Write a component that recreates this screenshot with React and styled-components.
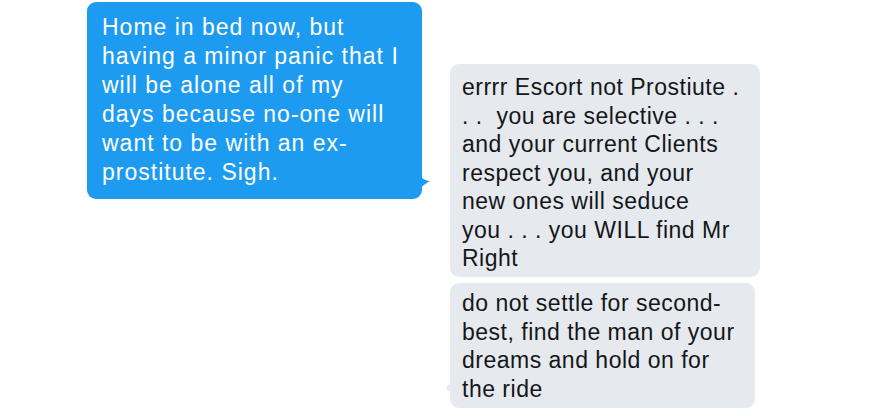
import styled, { createGlobalStyle } from 'styled-components';

const Global = createGlobalStyle`
  html, body {
    margin: 0;
    padding: 0;
    background: #ffffff;
  }
  body {
    font-family: 'Liberation Sans', Arial, sans-serif;
  }
`;

const Page = styled.div`
  width: 894px;
  height: 416px;
  display: flex;
  align-items: flex-start;
  overflow: hidden;
`;

const Column = styled.div`
  display: flex;
  flex-direction: column;
  gap: 6px;
  margin-left: ${(p) => p.left}px;
  margin-top: ${(p) => p.top}px;
`;

const Bubble = styled.div`
  position: relative;
  box-sizing: border-box;
  width: ${(p) => p.width}px;
  height: ${(p) => p.height}px;
  padding: ${(p) => p.padTop}px 0 0 ${(p) => p.padLeft}px;
  border-radius: 9px;
  background: ${(p) => (p.mine ? '#1d9bf0' : '#e6e9ed')};
  color: ${(p) => (p.mine ? '#ffffff' : '#14171a')};
  font-size: 23px;
  line-height: ${(p) => p.lh}px;
  letter-spacing: ${(p) => (p.mine ? 1 : 0.5)}px;
`;

const Line = styled.div`
  white-space: pre;
`;

const Tail = styled.svg`
  position: absolute;
  bottom: ${(p) => p.bottom}px;
  ${(p) => (p.side === 'right' ? 'right: -10px;' : 'left: -4px;')}
`;

const mine = [
  'Home in bed now, but',
  'having a minor panic that I',
  'will be alone all of my',
  'days because no-one will',
  'want to be with an ex-',
  'prostitute. Sigh.',
];

const reply1 = [
  'errrr Escort not Prostiute .',
  '. .  you are selective . . .',
  'and your current Clients',
  'respect you, and your',
  'new ones will seduce',
  'you . . . you WILL find Mr',
  'Right',
];

const reply2 = [
  'do not settle for second-',
  'best, find the man of your',
  'dreams and hold on for',
  'the ride',
];

const App = () => {
  return (
    <Page>
      <Global />
      <Column left={87} top={2}>
        <Bubble mine width={335} height={197} padTop={11} padLeft={15} lh={29}>
          {mine.map((l) => (
            <Line key={l}>{l}</Line>
          ))}
          <Tail side="right" bottom={11} width="12" height="16" viewBox="0 0 12 16">
            <path d="M0 0 C0.5 5 3 8.5 10 9 C7 11 3 13.5 0 16 Z" fill="#1d9bf0" />
          </Tail>
        </Bubble>
      </Column>
      <Column left={28} top={64}>
        <Bubble width={310} height={213} padTop={9} padLeft={12} lh={28.5}>
          {reply1.map((l) => (
            <Line key={l}>{l}</Line>
          ))}
        </Bubble>
        <Bubble width={305} height={125} padTop={6} padLeft={12} lh={28.5}>
          {reply2.map((l) => (
            <Line key={l}>{l}</Line>
          ))}
          <Tail side="left" bottom={16} width="6" height="10" viewBox="0 0 6 10">
            <path d="M6 0 C3 2 0 4 0 6 C0 8 3 10 6 10 Z" fill="#e9ecef" />
          </Tail>
        </Bubble>
      </Column>
    </Page>
  );
};

export default App;
